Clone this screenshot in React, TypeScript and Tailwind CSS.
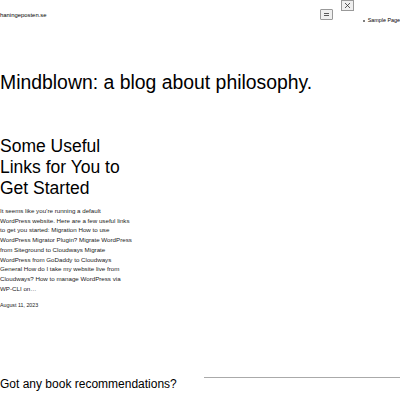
export default function App() {
  return (
    <div className="h-[400px] w-[400px] overflow-hidden bg-white font-['Liberation_Sans',Arial,sans-serif] text-black">
      <header className="flex h-[25px] items-start justify-between">
        <p className="mt-[11px] text-[5.9px] leading-[8px]">haningeposten.se</p>
        <div className="flex items-start">
          <button className="mt-[9px] flex h-[11px] w-[13px] items-center justify-center rounded-[1px] border border-[#999] bg-[#efefef]">
            <svg width="7" height="5" viewBox="0 0 7 5">
              <path d="M1 1.5h5M1 3.5h5" stroke="#333" strokeWidth="0.8" />
            </svg>
          </button>
          <button className="ml-[8px] flex h-[11px] w-[13px] items-center justify-center border border-[#999] bg-[#efefef]">
            <svg width="7" height="7" viewBox="0 0 7 7">
              <path d="M1 1l5 5M6 1L1 6" stroke="#333" strokeWidth="0.8" />
            </svg>
          </button>
          <ul className="ml-[9px] mt-[17px] text-[5.4px] leading-[7px]">
            <li className="flex items-center gap-[3px]">
              <span className="h-[2px] w-[2px] rounded-full bg-[#555]" />
              <span>Sample Page</span>
            </li>
          </ul>
        </div>
      </header>
      <h1 className="mt-[45px] text-[19.4px] leading-[24px]">Mindblown: a blog about philosophy.</h1>
      <article className="mt-[42px]">
        <h2 className="w-[130px] text-[17.5px] leading-[21px]">Some Useful Links for You to Get Started</h2>
        <p className="mt-[7px] w-[132px] text-[6.2px] leading-[9.7px] text-[#222]">
          It seems like you’re running a default WordPress website. Here are a few useful links to get you started: Migration How to use WordPress Migrator Plugin? Migrate WordPress from Siteground to Cloudways Migrate WordPress from GoDaddy to Cloudways General How do I take my website live from Cloudways? How to manage WordPress via WP-CLI on…
        </p>
        <p className="mt-[8px] text-[5.3px] leading-[8px] text-[#222]">August 11, 2023</p>
      </article>
      <section className="mt-[59px] flex items-start">
        <h2 className="mt-[8px] w-[204px] shrink-0 text-[12px] leading-[16px]">Got any book recommendations?</h2>
        <hr className="mt-[9px] w-full border-t border-[#aaa]" />
      </section>
    </div>
  );
}
